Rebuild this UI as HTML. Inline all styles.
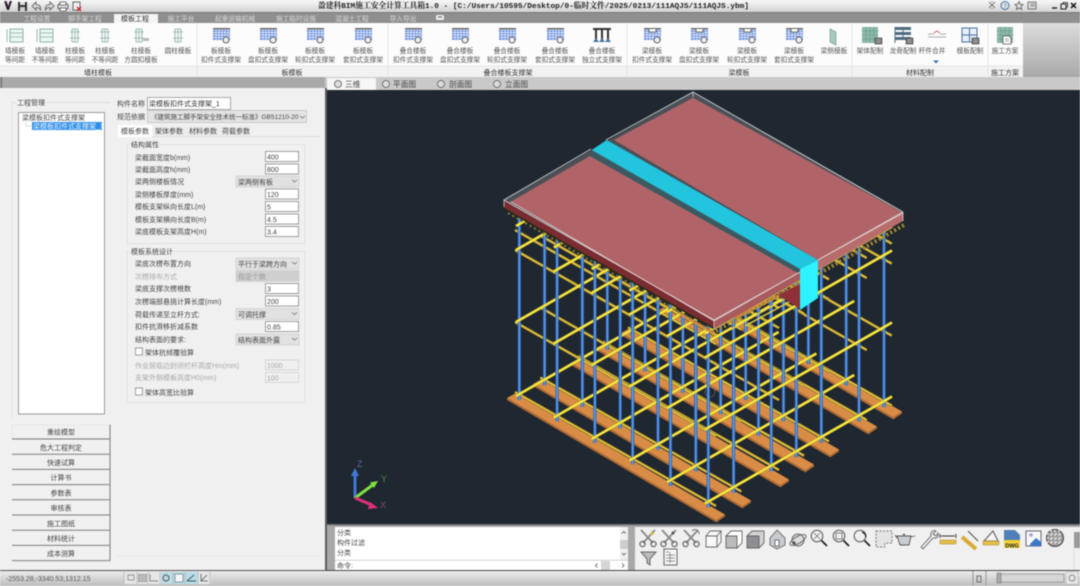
<!DOCTYPE html>
<html><head><meta charset="utf-8"><style>
html,body{margin:0;padding:0;width:1080px;height:586px;overflow:hidden;background:#f0f0f0}
svg{display:block;filter:blur(.42px)}
text{font-family:"Liberation Sans","Noto Sans CJK SC",sans-serif;font-size:7px;fill:#444}
.r text{font-size:6.7px;fill:#555}
.m{text-anchor:middle}
.t{fill:#d8d8d8;text-anchor:middle;font-size:6.7px}
.d{fill:#a8a8a8}
.b{fill:#333}
</style></head><body>
<svg width="1080" height="586" viewBox="0 0 1080 586" xmlns="http://www.w3.org/2000/svg">
<defs>
<linearGradient id="tb" x1="0" y1="0" x2="0" y2="1"><stop offset="0" stop-color="#f8f8f8"/><stop offset="1" stop-color="#cfcfcf"/></linearGradient>
<linearGradient id="rr" x1="0" y1="0" x2="0" y2="1"><stop offset="0" stop-color="#dcdcdc"/><stop offset="1" stop-color="#a9a9a9"/></linearGradient>
<linearGradient id="st" x1="0" y1="0" x2="0" y2="1"><stop offset="0" stop-color="#ececec"/><stop offset="1" stop-color="#bdbdbd"/></linearGradient>

<g id="wall" fill="none"><path d="M-8 -6V7" stroke="#9bb" stroke-width="1"/><rect x="-5" y="-6" width="13" height="13" stroke="#7fb0a4" stroke-width=".9" fill="#eef5f3"/><path d="M-5 -2H8M-5 2H8" stroke="#7fb0a4" stroke-width=".8"/></g>
<g id="colm" fill="none"><rect x="-3" y="-6" width="6" height="13" stroke="#8db0aa" stroke-width=".8" fill="#f2f7f6"/><path d="M0 -6V7M-5 -3H5M-5 3H5" stroke="#8db0aa" stroke-width=".7"/></g>
<g id="grid"><rect x="-8" y="-7" width="17" height="1.500" fill="#666"/><rect x="-8" y="-5" width="17" height="10" fill="#7396e0"/><path d="M-8 -2.500H9M-8 0H9M-8 2.500H9M-5 -5V5M-2 -5V5M1 -5V5M4 -5V5M7 -5V5" stroke="#e6edfb" stroke-width=".7"/><circle cx="5" cy="5" r="3" fill="#eee" stroke="#667" stroke-width="1.100"/></g>
<g id="beam"><rect x="-8" y="-7" width="17" height="1.500" fill="#666"/><rect x="-8" y="-5" width="17" height="10" fill="#7396e0"/><path d="M-8 -2.500H9M-8 0H9M-8 2.500H9M-5 -5V5M-2 -5V5M1 -5V5M4 -5V5M7 -5V5" stroke="#e6edfb" stroke-width=".7"/><rect x="-3" y="-6" width="7" height="3" fill="#fff"/><path d="M-3 -6V-3H4V-6" fill="none" stroke="#666"/><circle cx="5" cy="5" r="3" fill="#eee" stroke="#667" stroke-width="1.100"/></g>
<g id="tex"><rect x="-8" y="-8" width="16" height="16" fill="#8db8aa"/><path d="M-8 -4H8M-8 0H8M-8 4H8M-4 -8V8M0 -8V8M4 -8V8" stroke="#5f9484" stroke-width=".7" stroke-dasharray="1.500 1"/></g>
<g id="badge"><rect x="0" y="0" width="7" height="6" fill="#777" stroke="#444" stroke-width=".6"/><path d="M1.500 2H5.500M1.500 4H5.500" stroke="#ddd" stroke-width=".6"/></g>

<g id="sci" fill="none" stroke="#666" stroke-width="1.300"><path d="M-7 -8L5 5M7 -8L-5 5" stroke="#888" stroke-width="1.800"/><circle cx="-5.500" cy="6" r="2.600"/><circle cx="5.500" cy="6" r="2.600"/></g>
<g id="mag" fill="none" stroke="#555" stroke-width="1"><circle cx="-2" cy="-2" r="5.800"/><path d="M2.500 2.500L8 8" stroke="#222" stroke-width="1.800"/></g>

<path id="p" fill="none" d="M519.300 215V400M544.600 205.500V385.500M582.300 184V364M607.300 169.700V349.700M632.300 155.400V335.400M670 134V314M695 119.600V299.600"/>
<path id="br" fill="none" d="M516 396L703 289M516 322L703 215M516 250L703 143M516 226L703 119"/>
<g id="col">
<use href="#p" stroke="#2f5fae" stroke-width="3.200"/>
<use href="#p" stroke="#5a9bea" stroke-width="1.600"/>
<use href="#br" stroke="#b8a52c" stroke-width="3"/>
<use href="#br" stroke="#fbea42" stroke-width="2"/>
</g>
<path id="gl" fill="none" d="M515 392L716 506M515 322L716 436M515 250L716 364M515 230L716 344"/>
<g id="gold"><use href="#gl" stroke="#7d6a22" stroke-width="3"/><use href="#gl" stroke="#e4c440" stroke-width="1.800"/></g>
<g id="plank"><polygon points="507,398 516,393 725,514.500 716.300,520.400" fill="#d98c45"/><polygon points="507,398 716.300,520.400 725,514.500 725,516.500 716.300,522.400 507,400" fill="#b06a34"/></g>
</defs>

<!-- window chrome -->
<rect width="1080" height="13" fill="url(#tb)"/>
<rect y="12" width="1080" height="1" fill="#777"/>
<rect y="13" width="1080" height="10" fill="#8f8f8f"/>
<rect x="114" y="14" width="44" height="9" fill="#f4f4f4"/>
<rect y="23" width="1023" height="43" fill="#fcfcfc"/>
<rect y="66" width="1023" height="11" fill="#f2f2f2"/>
<rect x="1023" y="23" width="57" height="54" fill="url(#rr)"/>
<rect y="77" width="325" height="11" fill="#a9a9a9"/>
<rect y="77" width="2" height="11" fill="#777"/>
<rect x="325" y="77" width="755" height="13" fill="#c9c9c9"/>
<rect x="327" y="78" width="49" height="12" fill="#f6f6f6"/>

<!-- left quick toolbar -->
<path d="M4 1L7 10L9 10L12 1L9.500 1L8.500 6L6.500 1Z" fill="#2c2233"/><path d="M4 1H7V4Z" fill="#7a3a70"/>
<rect x="18" y="2" width="9" height="9" fill="#333"/><rect x="20" y="2" width="5" height="3" fill="#ddd"/><rect x="20" y="7" width="5" height="4" fill="#ccc"/>
<path d="M32 6L36 2V4.500C40 4.500 41 7 40.500 10C39.500 8 38 7.500 36 7.500V10Z" fill="#ddd" stroke="#555" stroke-width=".8"/>
<path d="M54 6L50 2V4.500C46 4.500 45 7 45.500 10C46.500 8 48 7.500 50 7.500V10Z" fill="#ddd" stroke="#555" stroke-width=".8"/>
<rect x="58" y="4" width="10" height="5" rx="1.500" fill="#ddd" stroke="#444" stroke-width=".8"/><rect x="60" y="2" width="6" height="3" fill="#fff" stroke="#444" stroke-width=".7"/><rect x="60" y="8" width="6" height="3" fill="#fff" stroke="#444" stroke-width=".7"/>
<rect x="73" y="2" width="7" height="8" fill="#eee" stroke="#444" stroke-width=".8"/><path d="M77 7L81 11M81 7L77 11" stroke="#c22" stroke-width="1.300"/>

<text x="318" y="8" style="font-family:'Liberation Mono','Noto Serif CJK SC',monospace;font-weight:bold;font-size:7.75px;fill:#222">盈建科BIM施工安全计算工具箱1.0 - [C:/Users/10595/Desktop/0-临时文件/2025/0213/111AQJS/111AQJS.ybm]</text>

<!-- title right icons -->
<g fill="none" stroke="#555" stroke-width=".8"><path d="M989 2L995 8M995 2L989 8M992 2V1M992 9V8"/><circle cx="1005" cy="5.500" r="4" stroke="#3a6ea5" stroke-width="1"/><path d="M1019 1.500L1020.200 4.300L1023 4.600L1021 6.500L1021.600 9.500L1019 8L1016.400 9.500L1017 6.500L1015 4.600L1017.800 4.300Z"/><rect x="1028" y="2" width="8" height="7"/><path d="M1030 4H1035M1030 6H1035"/></g>
<text x="1005" y="8" class="m" style="font-size:6px;fill:#3a6ea5">?</text>
<path d="M1052 8H1057" stroke="#222" stroke-width="1.400"/><rect x="1061" y="4" width="5" height="5" fill="none" stroke="#222"/><path d="M1063 4V2.500H1067.500V7H1066" fill="none" stroke="#222" stroke-width=".8"/><path d="M1071 3L1076 8M1076 3L1071 8" stroke="#111" stroke-width="1.500"/>

<!-- tabs -->
<text x="37" y="21" class="t">工程设置</text>
<text x="85" y="21" class="t">脚手架工程</text>
<text x="135" y="21" class="m b" style="font-size:7px">模板工程</text>
<text x="181" y="21" class="t">施工平台</text>
<text x="235" y="21" class="t">起重运输机械</text>
<text x="296" y="21" class="t">施工临时设施</text>
<text x="352" y="21" class="t">混凝土工程</text>
<text x="403" y="21" class="t">导入导出</text>
<rect x="436" y="15" width="8" height="5" rx="1.500" fill="#eee"/><path d="M438 17H442" stroke="#555"/>

<!-- ribbon separators -->
<path d="M197 24V76M388 24V76M627 24V76M852 24V76M988 24V76" stroke="#e4e4e4"/>
<path d="M0 66H1023" stroke="#e6e6e6"/>

<!-- ribbon icons -->
<use href="#wall" x="15" y="35"/><use href="#wall" x="45" y="35"/>
<use href="#colm" x="75" y="35"/><use href="#colm" x="105" y="35"/><use href="#colm" x="139" y="35"/>
<rect x="143" y="38" width="6" height="3" fill="#bbb"/>
<use href="#colm" x="178" y="35"/>
<use href="#grid" x="221" y="35"/><use href="#grid" x="268" y="35"/><use href="#grid" x="315" y="35"/><use href="#grid" x="363" y="35"/>
<use href="#grid" x="413" y="35"/><use href="#grid" x="460" y="35"/><use href="#grid" x="507" y="35"/><use href="#grid" x="555" y="35"/>
<g fill="#4a6f9a"><rect x="593" y="28" width="18" height="2" fill="#333"/><rect x="595" y="30" width="2" height="10" fill="#333"/><rect x="601" y="30" width="2" height="10" fill="#333"/><rect x="607" y="30" width="2" height="10" fill="#333"/><path d="M593 42L596 38L599 42ZM599 42L602 38L605 42ZM605 42L608 38L611 42Z"/></g>
<use href="#beam" x="652" y="35"/><use href="#beam" x="699" y="35"/><use href="#beam" x="747" y="35"/><use href="#beam" x="794" y="35"/>
<path d="M830 29L836 32V45L830 42Z" fill="#a8c8bb" stroke="#7d9f92" stroke-width=".7"/>
<use href="#tex" x="870" y="35"/><use href="#badge" x="875" y="38"/>
<rect x="895" y="27" width="16" height="3" fill="#4f6d80"/><rect x="895" y="32" width="16" height="3" fill="#4f6d80"/><rect x="895" y="37" width="16" height="3" fill="#4f6d80"/><path d="M895 27V43M903 30V40" stroke="#4f6d80"/><use href="#badge" x="906" y="38"/>
<path d="M928 34H934M940 34H946M928 37H946" stroke="#aaa" stroke-width="1"/><path d="M934 33L937 31L940 33" fill="none" stroke="#c55" stroke-width=".8"/>
<rect x="962" y="28" width="15" height="14" fill="#e6effa" stroke="#4a6f9a"/><path d="M969.500 28V42M962 35H977" stroke="#4a6f9a"/><use href="#badge" x="972" y="38"/>
<use href="#tex" x="1005" y="35"/><path d="M1003 36H1009L1011 38V44H1003Z" fill="#fff" stroke="#555" stroke-width=".8"/><path d="M1005 39H1009M1005 41H1009" stroke="#888" stroke-width=".7"/>

<!-- ribbon labels -->
<g class="r">
<text x="15" y="53" class="m">墙模板</text><text x="15" y="62" class="m">等间距</text>
<text x="45" y="53" class="m">墙模板</text><text x="45" y="62" class="m">不等间距</text>
<text x="75" y="53" class="m">柱模板</text><text x="75" y="62" class="m">等间距</text>
<text x="105" y="53" class="m">柱模板</text><text x="105" y="62" class="m">不等间距</text>
<text x="141" y="53" class="m">柱模板</text><text x="141" y="62" class="m">方圆扣模板</text>
<text x="178" y="53" class="m">圆柱模板</text>
<text x="221" y="53" class="m">板模板</text><text x="221" y="62" class="m">扣件式支撑架</text>
<text x="268" y="53" class="m">板模板</text><text x="268" y="62" class="m">盘扣式支撑架</text>
<text x="315" y="53" class="m">板模板</text><text x="315" y="62" class="m">轮扣式支撑架</text>
<text x="363" y="53" class="m">板模板</text><text x="363" y="62" class="m">套扣式支撑架</text>
<text x="413" y="53" class="m">叠合楼板</text><text x="413" y="62" class="m">扣件式支撑架</text>
<text x="460" y="53" class="m">叠合楼板</text><text x="460" y="62" class="m">盘扣式支撑架</text>
<text x="507" y="53" class="m">叠合楼板</text><text x="507" y="62" class="m">轮扣式支撑架</text>
<text x="555" y="53" class="m">叠合楼板</text><text x="555" y="62" class="m">套扣式支撑架</text>
<text x="602" y="53" class="m">叠合楼板</text><text x="602" y="62" class="m">独立式支撑架</text>
<text x="652" y="53" class="m">梁模板</text><text x="652" y="62" class="m">扣件式支撑架</text>
<text x="699" y="53" class="m">梁模板</text><text x="699" y="62" class="m">盘扣式支撑架</text>
<text x="747" y="53" class="m">梁模板</text><text x="747" y="62" class="m">轮扣式支撑架</text>
<text x="794" y="53" class="m">梁模板</text><text x="794" y="62" class="m">套扣式支撑架</text>
<text x="834" y="53" class="m">梁侧模板</text>
<text x="870" y="53" class="m">架体配制</text>
<text x="903" y="53" class="m">龙骨配制</text>
<text x="932" y="53" class="m">杆件合并</text>
<text x="970" y="53" class="m">模板配制</text>
<text x="1005" y="53" class="m">施工方案</text>
</g>
<path d="M933 60.500H939L936 63.500Z" fill="#3a6ea5"/>
<text x="98" y="75" class="m b">墙柱模板</text>
<text x="292" y="75" class="m b">板模板</text>
<text x="508" y="75" class="m b">叠合楼板支撑架</text>
<text x="739" y="75" class="m b">梁模板</text>
<text x="920" y="75" class="m b">材料配制</text>
<text x="1005" y="75" class="m b">施工方案</text>

<!-- view tabs -->
<g fill="#ddd" stroke="#555" stroke-width=".8"><circle cx="338" cy="84" r="3.500"/><circle cx="386" cy="84" r="3.500"/><circle cx="441" cy="84" r="3.500"/><circle cx="497" cy="84" r="3.500"/></g>
<text x="345" y="87" style="font-size:7.700px">三维</text>
<text x="393" y="87" style="font-size:7.700px">平面图</text>
<text x="449" y="87" style="font-size:7.700px">剖面图</text>
<text x="505" y="87" style="font-size:7.700px">立面图</text>

<!-- viewport -->
<rect x="327" y="90" width="753" height="434" fill="#1f2730"/>
<rect x="325" y="88" width="2" height="483" fill="#5d5d5d"/>

<!-- planks -->
<use href="#plank" x="177" y="-103"/><use href="#plank" x="152" y="-88"/><use href="#plank" x="114" y="-65"/><use href="#plank" x="89" y="-50"/><use href="#plank" x="64" y="-35"/><use href="#plank" x="26" y="-14"/><use href="#plank"/>
<!-- gold tubes -->
<use href="#gold" x="175.700" y="-100.400"/><use href="#gold" x="150.700" y="-86"/><use href="#gold" x="113" y="-64.600"/><use href="#gold" x="88" y="-50.300"/><use href="#gold" x="63" y="-36"/><use href="#gold" x="25.300" y="-14.500"/><use href="#gold"/>
<!-- posts + bright tubes -->
<use href="#col"/><use href="#col" x="37.800" y="21.500"/><use href="#col" x="75.600" y="43"/><use href="#col" x="113.400" y="64.500"/><use href="#col" x="151.200" y="86"/><use href="#col" x="189" y="107.500"/>

<!-- under-slab details -->
<path d="M680 314L714 333M735 318L800 285" stroke="#d98c45" stroke-width="3" fill="none"/>
<path d="M730 330L790 296M745 326L800 296" stroke="#e8d040" stroke-width="1.500" fill="none"/>
<path d="M508 213L712 331" stroke="#8a7a30" stroke-width="2" stroke-dasharray="2 3" fill="none"/>
<path d="M716 331L800 283M820 273L904 225" stroke="#a48a34" stroke-width="4" stroke-dasharray="2 2.500" fill="none"/>

<!-- slab -->
<polygon points="504,200 714,320 714,329 504,209" fill="#7a2c30"/>
<path d="M504 208.500L714 328.500" stroke="#2b2a16" stroke-width="1.600"/>
<polygon points="714,320 800,271 800,280 714,329" fill="#a85a5c"/>
<polygon points="818,260 903,212 903,221 818,270" fill="#b86c6c"/>
<polygon points="778,295 800,284 800,309" fill="#8f2f36"/>
<polygon points="693,92 504,200 714,320 903,212" fill="#4b5056"/>
<polygon points="590,156 510.700,201.700 714,321 798,273" fill="#b06468"/>
<polygon points="693,97.700 614,140 818,260 903,213" fill="#b06468"/>
<polygon points="591.700,150 590,156 798,273 800,269" fill="#3b5961"/>
<polygon points="606.700,140 591.700,150 800,269 818,260" fill="#22c4de"/>
<polygon points="800,269 818,260 818,298 800,310" fill="#2df2ff"/>
<path d="M606 140L693 92L903 212M591 149L504 200L714 320L800 272M818 260L903 212" fill="none" stroke="#cfd2d4" stroke-width=".9"/>
<path d="M504 200V207M903 212V221M714 320V329M693 92V97" stroke="#ddd" stroke-width=".7"/>
<path d="M510.700 201.700L714 321L798 273M818 260L903 213" fill="none" stroke="#f0dede" stroke-width=".7"/>

<!-- crosshair -->
<g fill="none" stroke="#8895a0" stroke-width=".6" opacity=".7"><path d="M704 372H712L704 380H712"/><circle cx="710" cy="392" r="5"/></g>

<!-- axis -->
<path d="M355 498V474" stroke="#3f78d8" stroke-width="3"/><path d="M355 468L351 476H359Z" fill="#3f78d8"/>
<path d="M355 498L374 484" stroke="#7ee040" stroke-width="3"/><path d="M378 481L370 482.500L374 488Z" fill="#7ee040"/>
<path d="M355 498L372 505" stroke="#e0307a" stroke-width="3"/><path d="M378 508L370 502L368 509Z" fill="#e0307a"/>
<text x="357" y="467" style="font-size:9px;fill:#5d6a9a">Z</text>
<text x="381" y="482" style="font-size:9px;fill:#5c8a48">Y</text>
<text x="380" y="508" style="font-size:9px;fill:#8a4a68">X</text>

<!-- left panel -->
<rect y="88" width="325" height="483" fill="#f0f0f0"/>
<path d="M12 102.500H16M47 102.500H110" stroke="#dcdcdc"/>
<path d="M12 102.500V418" stroke="#e2e2e2"/>
<text x="17" y="105">工程管理</text>
<rect x="18.500" y="112.500" width="86" height="301.500" fill="#fff" stroke="#9a9a9a"/>
<text x="22" y="120">梁模板扣件式支撑架</text>
<path d="M26 122V126H32" fill="none" stroke="#aaa" stroke-width=".7" stroke-dasharray="1 1"/>
<rect x="32" y="122" width="70" height="8" fill="#2f8fe8"/>
<text x="33" y="128.500" style="fill:#eaf4ff">梁模板扣件式支撑架_1</text>

<text x="117" y="106">构件名称</text>
<rect x="147.500" y="97.500" width="83" height="12" fill="#fff" stroke="#888" stroke-width=".7"/>
<text x="149" y="106" class="b">梁模板扣件式支撑架_1</text>
<text x="117" y="119">规范依据</text>
<rect x="147.500" y="110.500" width="159" height="12" fill="#e3e3e3" stroke="#bbb" stroke-width=".7"/>
<text x="151" y="119" style="font-size:6.500px">《建筑施工脚手架安全技术统一标准》GB51210-20</text>
<path d="M300 116L302.500 118L305 116" fill="none" stroke="#666" stroke-width=".7"/>

<rect x="118" y="125" width="34" height="12" fill="#fff"/>
<rect x="153" y="126" width="97" height="10" fill="#ececec"/>
<path d="M152 136.500H320" stroke="#dcdcdc"/>
<text x="135" y="133.500" class="m">模板参数</text>
<text x="169" y="133.500" class="m">架体参数</text>
<text x="203" y="133.500" class="m">材料参数</text>
<text x="236" y="133.500" class="m">荷载参数</text>

<rect x="127" y="144.500" width="178" height="99" fill="none" stroke="#e0e0e0"/>
<rect x="130" y="141" width="29" height="8" fill="#f0f0f0"/>
<text x="131" y="147">结构属性</text>
<rect x="127" y="251.500" width="178" height="151" fill="none" stroke="#e0e0e0"/>
<rect x="130" y="248" width="44" height="8" fill="#f0f0f0"/>
<text x="131" y="254">模板系统设计</text>

<g>
<text x="135" y="160">梁截面宽度b(mm)</text>
<text x="135" y="172">梁截面高度h(mm)</text>
<text x="135" y="184">梁两侧楼板情况</text>
<text x="135" y="197">梁侧楼板厚度(mm)</text>
<text x="135" y="209">模板支架纵向长度L(m)</text>
<text x="135" y="222">模板支架横向长度B(m)</text>
<text x="135" y="234">梁底模板支架高度H(m)</text>
<text x="135" y="266">梁底次楞布置方向</text>
<text x="135" y="279" class="d">次楞排布方式</text>
<text x="135" y="291">梁底支撑次楞根数</text>
<text x="135" y="304">次楞端部悬挑计算长度(mm)</text>
<text x="135" y="317">荷载传递至立杆方式:</text>
<text x="135" y="329">扣件抗滑移折减系数</text>
<text x="135" y="342">结构表面的要求:</text>
<text x="145" y="355">架体抗倾覆验算</text>
<text x="135" y="368" class="d">作业层临边封闭栏杆高度Hm(mm)</text>
<text x="135" y="380" class="d">支架外侧模板高度H0(mm)</text>
<text x="145" y="395">架体高宽比验算</text>
</g>
<g fill="#fff" stroke="#7a7a7a" stroke-width=".7">
<rect x="265.500" y="151.500" width="33" height="10"/>
<rect x="265.500" y="164" width="33" height="10"/>
<rect x="265.500" y="189" width="33" height="10"/>
<rect x="265.500" y="201.500" width="33" height="10"/>
<rect x="265.500" y="214" width="33" height="10"/>
<rect x="265.500" y="226.500" width="33" height="10"/>
<rect x="265.500" y="283.500" width="33" height="10"/>
<rect x="265.500" y="296" width="33" height="10"/>
<rect x="265.500" y="321.500" width="33" height="10"/>
<rect x="135.500" y="348" width="7" height="7"/>
<rect x="135.500" y="388" width="7" height="7"/>
<rect x="265.500" y="360" width="33" height="10" fill="#efefef" stroke="#ccc"/>
<rect x="265.500" y="372.500" width="33" height="10" fill="#efefef" stroke="#ccc"/>
</g>
<g fill="#e1e1e1" stroke="#c8c8c8" stroke-width=".6">
<rect x="236" y="176" width="63" height="11"/>
<rect x="236" y="258" width="63" height="11"/>
<rect x="236" y="270.500" width="63" height="11" fill="#cfcfcf"/>
<rect x="236" y="308.500" width="63" height="11"/>
<rect x="236" y="334" width="63" height="11"/>
</g>
<path d="M292 180L294.500 182L297 180M292 262L294.500 264L297 262M292 312.500L294.500 314.500L297 312.500M292 338L294.500 340L297 338" fill="none" stroke="#666" stroke-width=".7"/>
<text x="267" y="159.500">400</text>
<text x="267" y="172">800</text>
<text x="267" y="197">120</text>
<text x="267" y="209.500">5</text>
<text x="267" y="222">4.5</text>
<text x="267" y="234.500">3.4</text>
<text x="267" y="291.500">3</text>
<text x="267" y="304">200</text>
<text x="267" y="329.500">0.85</text>
<text x="267" y="368" class="d">1000</text>
<text x="267" y="380.500" class="d">100</text>
<text x="238" y="184.500">梁两侧有板</text>
<text x="238" y="266.500">平行于梁跨方向</text>
<text x="238" y="279" style="fill:#999">指定个数</text>
<text x="238" y="317">可调托撑</text>
<text x="238" y="342.500">结构表面外露</text>
<path d="M118 556H320" stroke="#e2e2e2"/>

<!-- buttons -->
<g fill="#f0f0f0" stroke="#e8e8e8"><rect x="12" y="425" width="98" height="13"/></g>
<path d="M12 439H110V424.500M12 454.200H110V439.500M12 469.400H110V454.700M12 484.600H110V469.900M12 499.800H110V485.100M12 515H110V500.300M12 530.200H110V515.500M12 545.400H110V530.700M12 560.600H110V545.900" fill="none" stroke="#7c7c7c" stroke-width="1"/>
<text x="61" y="434.500" class="m">重绘模型</text>
<text x="61" y="450" class="m">危大工程判定</text>
<text x="61" y="465" class="m">快速试算</text>
<text x="61" y="480" class="m">计算书</text>
<text x="61" y="495.500" class="m">参数表</text>
<text x="61" y="510.500" class="m">审核表</text>
<text x="61" y="526" class="m">施工图纸</text>
<text x="61" y="541" class="m">材料统计</text>
<text x="61" y="556" class="m">成本测算</text>

<!-- command -->
<rect x="327" y="524" width="753" height="47" fill="#a8a8a8"/>
<rect x="327" y="524" width="753" height="1.500" fill="#777"/>
<rect x="335" y="527" width="285" height="33" fill="#fff"/>
<rect x="335" y="560.500" width="293" height="9.500" fill="#fff"/>
<rect x="620" y="527" width="8" height="33" fill="#f0f0f0"/>
<rect x="620" y="540" width="8" height="9" fill="#cdcdcd"/>
<rect x="601" y="561" width="9" height="9" fill="#d5d5d5"/>
<path d="M622 533.500L623.800 531.500L625.800 533.500M622 553L623.800 555L625.800 553M597.500 563.500L595.500 565.500L597.500 567.500M622 563.500L624 565.500L622 567.500" fill="none" stroke="#555" stroke-width=".8"/>
<text x="337" y="535">分类</text>
<text x="337" y="545">构件过滤</text>
<text x="337" y="555">分类</text>
<text x="337" y="568">命令:</text>
<rect x="327" y="570" width="753" height="1" fill="#444"/>

<!-- toolbar -->
<rect x="635" y="527" width="445" height="43" fill="#f0f0f0"/>
<rect x="1074" y="532" width="6" height="16" fill="#9a9a9a"/>
<path d="M1074 549V570" stroke="#ddd"/>
<use href="#sci" x="648" y="538"/><path d="M651 530L652 532.500L654.500 533L652.500 535L651 534.500Z" fill="#e8b830"/>
<use href="#sci" x="669" y="538"/><circle cx="673" cy="533" r="1.500" fill="#555"/>
<use href="#sci" x="691" y="538"/><path d="M692 531A4 4 0 0 1 699 534" fill="none" stroke="#777"/>
<g stroke="#666" stroke-width=".9" fill="#f8f8f8">
<path d="M706 536H717V547H706ZM706 536L710 531H721L717 536M721 531V542L717 547"/>
<path d="M726 536H737V548H726Z" fill="#bbb"/><path d="M726 536L731 531H742V543L737 548V536H726Z" fill="#fff"/>
<path d="M747 536H759V548H747Z" fill="#8c8f93"/><path d="M747 536L752 531H764V543L759 548V536Z" fill="#d0d2d4"/>
<path d="M770 538L777 530L785 538V545L777 549L770 545Z" fill="#c7cbd0"/><rect x="775" y="540" width="4" height="6" fill="#fff"/>
</g>
<g fill="none" stroke="#666"><circle cx="798" cy="540" r="6" fill="#ddd"/><ellipse cx="798" cy="540" rx="9" ry="3.500" transform="rotate(-30 798 540)"/><circle cx="794" cy="543" r="1.300" fill="#333"/></g>
<use href="#mag" x="819" y="538"/><path d="M814 533L820 539M820 533L814 539" stroke="#666" stroke-width=".7"/>
<use href="#mag" x="841" y="538"/><rect x="836" y="533" width="6" height="6" fill="none" stroke="#666" stroke-width=".8"/>
<use href="#mag" x="862" y="538"/><path d="M862 532A6 6 0 0 1 866 537" fill="none" stroke="#222" stroke-width="1.300"/>
<path d="M876 531H892V543H885V547H876Z" fill="#e4e4e4" stroke="#777" stroke-dasharray="2 1.500"/>
<path d="M897 536H911L909 545H900ZM911 537L915 536M897 538L895 535" fill="#c9ccd0" stroke="#555" stroke-width=".9"/><circle cx="904" cy="534.500" r="1" fill="#555"/>
<path d="M921 547L931 536C930 531 934 530 936 531L933 534L936 536L938 533C939 536 937 539 933 538L923 549Z" fill="#eee" stroke="#666" stroke-width=".9"/>
<path d="M940 534V538M956 534V538M941 536H955" stroke="#333" stroke-width=".9"/><rect x="940" y="540" width="16" height="4" fill="#e5be48" stroke="#a88a2a" stroke-width=".5"/>
<path d="M962 537L976 549" stroke="#d8aa38" stroke-width="4"/><path d="M968 531L978 541" stroke="#444" stroke-width=".9"/>
<path d="M984 541L993 531L998 541Z" fill="#f6f6f6" stroke="#555"/><rect x="983" y="541" width="16" height="4" fill="#e5be48" stroke="#a88a2a" stroke-width=".5"/>
<path d="M1004 530H1015L1020 535V548H1004Z" fill="#f0d030"/><path d="M1004 530H1015L1020 535V540H1004Z" fill="#4f7fb8"/><rect x="1004" y="541" width="16" height="7" fill="#f2d23a"/>
<text x="1012" y="547.500" class="m" style="font-size:5.500px;font-weight:bold;fill:#222">DWG</text>
<rect x="1026" y="531" width="15" height="15" fill="#f8f8f8" stroke="#667"/><path d="M1030 544L1036 538L1041 542V546H1030Z" fill="#3a78c8"/><circle cx="1031" cy="535" r="1.800" fill="#9ac"/>
<circle cx="1055" cy="538" r="8.500" fill="#9a9a9a" stroke="#444"/><path d="M1047 534H1063M1047 538H1063M1047 542H1063M1051 530V546M1055 530V546M1059 530V546" stroke="#eee" stroke-width="1.200" stroke-dasharray="2 2"/>
<path d="M641 552H656L650 559V565L647 563V559Z" fill="#bbb" stroke="#666"/>
<rect x="664" y="549" width="13" height="16" fill="#f6f6f6" stroke="#666"/><path d="M666 552H669M666 555H675M666 558H675M666 561H675M670 552V563" stroke="#777" stroke-width=".7"/>

<!-- status bar -->
<rect y="571" width="1080" height="15" fill="url(#st)"/>
<rect y="570" width="327" height="1" fill="#555"/>
<text x="6" y="581" style="font-size:7px;fill:#555">-2553.28,-3340.53,1312.15</text>
<rect x="124" y="572" width="87" height="12" fill="#e6e6e6"/>
<rect x="161" y="572" width="37" height="12" fill="#b8dbe6"/>
<path d="M124 572V584M137 572V584M148 572V584M160 572V584M173 572V584M185 572V584M198 572V584M210 572V584" stroke="#aaa" stroke-width=".6"/>
<rect x="128" y="575" width="6" height="5" fill="none" stroke="#777" stroke-width=".7"/>
<rect x="138" y="574" width="9" height="8" fill="#999"/><path d="M138 576H147M138 578H147M138 580H147M141 574V582M144 574V582" stroke="#eee" stroke-width=".5"/>
<path d="M150 574V581H158" fill="none" stroke="#666" stroke-width=".7"/>
<circle cx="166" cy="578" r="3" fill="none" stroke="#555"/><rect x="175" y="574" width="8" height="8" fill="#f5f5f5" stroke="#678" stroke-width=".7"/>
<path d="M187 581H196M187 581L194 575" fill="none" stroke="#456" stroke-width=".9"/><path d="M201 574V581H208M201 581L207 575" fill="none" stroke="#556" stroke-width=".8"/>
<path d="M973 571V586M986 571V586" stroke="#999"/>
<rect x="977" y="576" width="4" height="6" fill="none" stroke="#555" stroke-width=".8"/>
<rect x="998" y="574" width="66" height="8" fill="#d6d6d6" stroke="#888" stroke-width=".7"/>
<rect x="997" y="573" width="4" height="10" fill="#aaa" stroke="#777" stroke-width=".6"/>
<rect x="1066" y="572" width="12" height="12" fill="#e8e8e8" stroke="#bbb" stroke-width=".6"/><circle cx="1072" cy="578" r="3" fill="none" stroke="#888"/>
</svg>
</body></html>
